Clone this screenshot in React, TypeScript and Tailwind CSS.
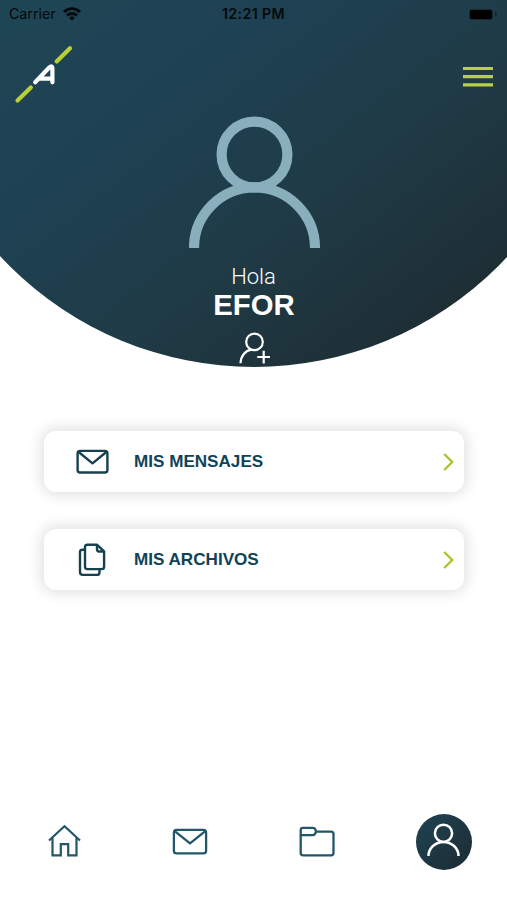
import type { ReactNode } from 'react'

function WifiIcon() {
  return (
    <svg width="18" height="14" viewBox="0 0 18 14" fill="none" stroke="#04090c" strokeWidth="2.8">
      <path d="M1 5a11.4 11.4 0 0 1 16 0" />
      <path d="M4 8.5a7.2 7.2 0 0 1 10 0" />
      <path d="M9 13.4 6.2 10.9a4 4 0 0 1 5.6 0Z" fill="#04090c" stroke="none" />
    </svg>
  )
}

function Logo() {
  return (
    <svg width="60" height="60" viewBox="0 0 60 60" fill="none" strokeLinecap="round">
      <path d="M42.600 16.400 56 3.200M3.500 55.600 16.800 42.500" stroke="#b9cf36" strokeWidth="4.2" />
      <path
        d="M21.200 37.300 35 22.800Q38.400 19.600 38.400 23.800V37.300M26 33.700H38"
        stroke="#fff"
        strokeWidth="4.2"
        strokeLinejoin="round"
      />
    </svg>
  )
}

function AvatarIcon() {
  return (
    <svg width="132" height="132" viewBox="0 0 132 132" fill="none" stroke="#8aafbc" strokeWidth="10.2">
      <circle cx="65.5" cy="38.5" r="32.9" />
      <path d="M5 132a60.5 60.5 0 0 1 121 0" />
    </svg>
  )
}

function AddUserIcon() {
  return (
    <svg width="32" height="32" viewBox="0 0 32 32" fill="none" stroke="#fff" strokeWidth="2.2">
      <circle cx="15.5" cy="9.9" r="8.3" />
      <path d="M1.5 31.3c.3-7.5 4.8-12.8 11-13.7M24.700 18.700v12.800M18.200 25h12.800" />
    </svg>
  )
}

function MenuIcon() {
  return (
    <svg className="mt-[20px]" width="30" height="24" viewBox="0 0 30 24" stroke="#b9cf48" strokeWidth="3.2">
      <path d="M0 3.5h30M0 11.700h30M0 19.900h30" />
    </svg>
  )
}

function MailIcon({ className }: { className: string }) {
  return (
    <svg className={className} viewBox="0 0 34 26" fill="none" stroke="currentColor" strokeLinejoin="round">
      <rect x="1.5" y="1.9" width="31" height="22.6" rx="2.6" />
      <path d="m2.3 2.9 14.7 12 14.7-12" />
    </svg>
  )
}

function FilesIcon() {
  return (
    <svg className="mr-px" width="28" height="34" viewBox="0 0 28 34" fill="none" stroke="currentColor" strokeWidth="2.4" strokeLinejoin="round">
      <path d="M9.3 1.8h9.800l7 6.500v15.500q0 2.300-2.300 2.300H9.300Q7 26.100 7 23.800V4.100Q7 1.800 9.300 1.800Z" />
      <path d="M19 2v4.600q0 1.900 2 1.900h5" />
      <path d="M7 6.800H4.300Q2 6.800 2 9.100v20q0 2.800 2.800 2.800h14q2.700 0 2.700-2.700V26.300" />
    </svg>
  )
}

function HomeIcon() {
  return (
    <svg className="mb-[2px]" width="34" height="34" viewBox="0 0 34 34" fill="none" stroke="currentColor" strokeWidth="2.2">
      <path d="M2 16.5 17.500 2.300l15.500 14.200" />
      <path d="M5.500 14v17.300h8.300V20.200h7.400v11.100h8.300V14" />
    </svg>
  )
}

function FolderIcon() {
  return (
    <svg width="36" height="32" viewBox="0 0 36 32" fill="none" stroke="currentColor" strokeWidth="2.3" strokeLinejoin="round">
      <path d="M1.700 4.200q0-2.300 2.300-2.300h10q1.600 0 2.200 1.400l1 2.300h14.800q2.500 0 2.500 2.500v18.900q0 2.300-2.300 2.300H4q-2.300 0-2.300-2.300Z" />
      <path d="M1.700 9.200h12q1.500 0 2.200-1.300l1.300-2.300" />
    </svg>
  )
}

function MenuCard({ icon, label }: { icon: ReactNode; label: string }) {
  return (
    <a className="flex h-[61px] items-center rounded-xl bg-white pr-[10px] pl-[30px] text-[#17414f] shadow-[0_0_14px_3px_rgba(0,0,0,0.12)]">
      <span className="flex w-[37px] justify-center">{icon}</span>
      <span className="ml-[23px] flex-1 text-[17.1px] font-bold text-[#0f4358]">{label}</span>
      <svg width="11" height="18" viewBox="0 0 11 18" fill="none" stroke="#a9c42f" strokeWidth="2.4">
        <path d="m1.2 1 8 8-8 8" />
      </svg>
    </a>
  )
}

export default function App() {
  return (
    <div className="flex h-[900px] w-[507px] flex-col overflow-hidden bg-white font-['Liberation_Sans',Arial,sans-serif]">
      <header className="flex h-[367px] flex-col bg-[linear-gradient(142deg,#1f4655_0%,#1e4153_30%,#1f3b46_58%,#1e3038_82%,#1d272b_100%)] [clip-path:circle(346px_at_254px_21px)]">
        <div className="grid h-7 grid-cols-3 items-center px-[9px] font-['Inter',sans-serif] text-[14.2px] text-[#04090c]">
          <div className="flex items-center gap-[7px]">
            <span>Carrier</span>
            <WifiIcon />
          </div>
          <span className="text-center font-semibold tracking-[0.4px]">12:21 PM</span>
          <div className="flex items-center justify-end gap-px pr-px">
            <span className="h-[9px] w-[22px] rounded-[2px] bg-black ring-1 ring-black/30" />
            <span className="ml-[2px] h-1 w-[2px] rounded-r bg-black/40" />
          </div>
        </div>

        <div className="flex h-[88px] items-start justify-between pt-[17px] pr-[14px] pl-[14px]">
          <Logo />
          <MenuIcon />
        </div>

        <div className="flex flex-col items-center pl-[2px] text-white">
          <AvatarIcon />
          <p className="mt-4 pr-[2px] font-['Roboto',sans-serif] text-[22px] leading-[26px] font-light">Hola</p>
          <h1 className="pr-px text-[29.3px] leading-[30px] font-bold">EFOR</h1>
          <div className="mt-[12px]">
            <AddUserIcon />
          </div>
        </div>
      </header>

      <main className="flex flex-1 flex-col gap-[37px] pt-16 pr-[43px] pl-[44px]">
        <MenuCard icon={<MailIcon className="h-[25px] w-[33px] stroke-[2.5]" />} label="MIS MENSAJES" />
        <MenuCard icon={<FilesIcon />} label="MIS ARCHIVOS" />
      </main>

      <nav className="flex h-[117px] items-center pl-[47px] text-[#24566a]">
        <HomeIcon />
        <MailIcon className="mr-[91px] ml-[91px] h-[27px] w-[36px] stroke-[2.2]" />
        <FolderIcon />
        <span className="ml-[81px] flex size-[56px] items-center justify-center rounded-full bg-[linear-gradient(135deg,#1f4353,#1d2b32)]">
          <svg className="mb-[3px]" width="34" height="34" viewBox="0 0 34 34" fill="none" stroke="#fff" strokeWidth="2.5">
            <circle cx="16.5" cy="10.3" r="8.6" />
            <path d="M1.5 33a15 14.1 0 0 1 30 0" />
          </svg>
        </span>
      </nav>
    </div>
  )
}
